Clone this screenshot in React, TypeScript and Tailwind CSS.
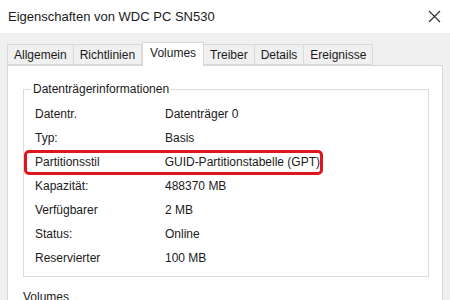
import React from 'react';

const rows = [
  { label: 'Datentr.', value: 'Datenträger 0' },
  { label: 'Typ:', value: 'Basis' },
  { label: 'Partitionsstil', value: 'GUID-Partitionstabelle (GPT)', marked: true },
  { label: 'Kapazität:', value: '488370 MB' },
  { label: 'Verfügbarer', value: '2 MB' },
  { label: 'Status:', value: 'Online' },
  { label: 'Reservierter', value: '100 MB' },
];

const tabs = ['Allgemein', 'Richtlinien', 'Volumes', 'Treiber', 'Details', 'Ereignisse'];

export default function App() {
  return (
    <div
      className="w-[450px] h-[300px] overflow-hidden bg-[#f0f0f0] text-[#1a1a1a]"
      style={{ fontFamily: '"Liberation Sans", Arial, sans-serif' }}
    >
      {/* title bar */}
      <div className="h-[33px] bg-white flex items-center justify-between pl-[8px] pr-[9px]">
        <span className="text-[13px]">Eigenschaften von WDC PC SN530</span>
        <svg width="13" height="13" viewBox="0 0 13 13" className="text-[#333]">
          <path d="M1 1 L12 12 M12 1 L1 12" stroke="currentColor" strokeWidth="1.2" fill="none" />
        </svg>
      </div>

      {/* tabs */}
      <div className="pl-[7px] pr-[7px] pt-[10px]">
        <div className="flex items-end h-[22px] text-[12px] whitespace-nowrap">
          {tabs.map((t) =>
            t === 'Volumes' ? (
              <div
                key={t}
                className="relative z-10 h-[24px] -mb-px bg-white border border-b-0 border-[#d9d9d9] px-[7px] flex items-center pb-[3px]"
              >
                {t}
              </div>
            ) : (
              <div
                key={t}
                className="h-[21px] bg-[#f0f0f0] border border-l-0 first:border-l border-[#d9d9d9] px-[6px] flex items-center"
              >
                {t}
              </div>
            )
          )}
        </div>

        {/* panel */}
        <div className="bg-white border border-[#d9d9d9] h-[260px] pl-[15px] pr-[12px] pt-[14px] text-[12px] whitespace-nowrap">
          <div className="relative border border-[#dcdcdc] h-[188px] mt-[9px] mr-[1px]">
            <span className="absolute -top-[9px] left-[7px] bg-white px-[2px] leading-[16px]">
              Datenträgerinformationen
            </span>
            <div className="pt-[12px] pl-[11px]">
              {rows.map((r) => (
                <div key={r.label} className="h-[24px] flex items-center">
                  {r.marked ? (
                    <div className="-ml-[11px] h-[25px] w-[299px] border-[3px] border-[#e0161f] rounded-[5px] flex items-center pl-[8px]">
                      <span className="w-[130px]">{r.label}</span>
                      <span>{r.value}</span>
                    </div>
                  ) : (
                    <>
                      <span className="w-[130px]">{r.label}</span>
                      <span>{r.value}</span>
                    </>
                  )}
                </div>
              ))}
            </div>
          </div>
          <div className="mt-[12px] leading-[16px]">Volumes</div>
        </div>
      </div>
    </div>
  );
}
